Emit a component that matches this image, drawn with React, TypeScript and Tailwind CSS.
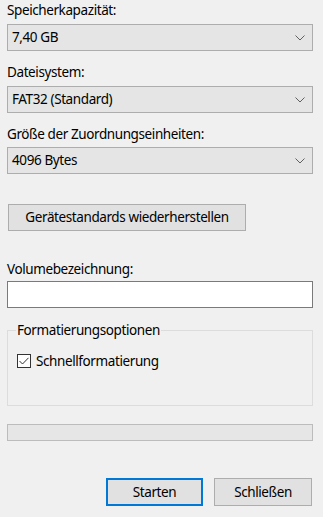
import React from "react";

function Chevron() {
  return (
    <svg width="10" height="6" viewBox="0 0 10 6" className="shrink-0">
      <polyline points="0.5,0.5 5,5 9.5,0.5" fill="none" stroke="#606060" strokeWidth="1" />
    </svg>
  );
}

function Combo({ value, className }: { value: string; className?: string }) {
  return (
    <div
      className={
        "flex h-[27px] items-center justify-between border border-[#adadad] bg-[#e5e5e5] pl-[4px] pr-[7px] " +
        (className ?? "")
      }
    >
      <span>{value}</span>
      <Chevron />
    </div>
  );
}

export default function App() {
  return (
    <div
      className="h-[517px] w-[323px] overflow-hidden bg-[#f0f0f0] pl-[7px] pr-[10px] text-[13.5px] tracking-[-0.4px] text-black"
      style={{ fontFamily: '"Noto Sans", "Open Sans", sans-serif' }}
    >
      <div className="h-5 leading-5">Speicherkapazität:</div>
      <Combo value="7,40 GB" className="mt-1" />

      <div className="mt-[11px] h-5 leading-5">Dateisystem:</div>
      <Combo value="FAT32 (Standard)" className="mt-1" />

      <div className="mt-[11px] h-5 leading-5">Größe der Zuordnungseinheiten:</div>
      <Combo value="4096 Bytes" className="mt-[3px]" />

      <button className="ml-px mt-[30px] flex h-[27px] w-[238px] items-center justify-center border border-[#adadad] bg-[#e1e1e1]">
        Gerätestandards wiederherstellen
      </button>

      <div className="mt-[28px] h-5 leading-5">Volumebezeichnung:</div>
      <div className="mt-[2px] h-[27px] border border-[#7a7a7a] bg-white" />

      <div className="relative mt-[22px] h-[76px] border border-[#dcdcdc]">
        <span className="absolute left-[8px] top-[-11px] bg-[#f0f0f0] px-px leading-5">
          Formatierungsoptionen
        </span>
        <label className="absolute left-[9px] top-[20px] flex items-center gap-[5px]">
          <span className="flex h-[14px] w-[14px] items-center justify-center border border-[#333333] bg-white">
            <svg width="10" height="8" viewBox="0 0 10 8">
              <polyline points="0.5,4 3.5,7 9.5,0.8" fill="none" stroke="#333333" strokeWidth="1" />
            </svg>
          </span>
          <span className="leading-5">Schnellformatierung</span>
        </label>
      </div>

      <div className="mt-[18px] h-[17px] border border-[#bcbcbc] bg-[#e6e6e6]" />

      <div className="mt-[37px] flex justify-end gap-[11px] pr-px">
        <button className="flex h-[28px] w-[97px] items-center justify-center border-2 border-[#0078d7] bg-[#e1e1e1]">
          Starten
        </button>
        <button className="flex h-[28px] w-[98px] items-center justify-center border border-[#adadad] bg-[#e1e1e1]">
          Schließen
        </button>
      </div>
    </div>
  );
}
